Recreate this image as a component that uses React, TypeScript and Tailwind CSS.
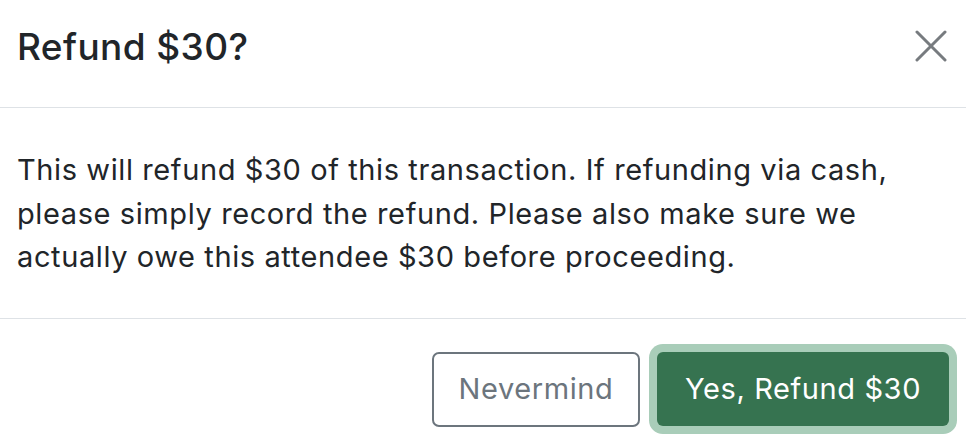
import React from 'react';

const FONT = "font-['Inter','Liberation_Sans',sans-serif]";

function CloseIcon() {
  return (
    <svg width="32" height="32" viewBox="0 0 32 32" fill="none">
      <path d="M2 2 L30 30 M30 2 L2 30" stroke="#777b7f" strokeWidth="3" strokeLinecap="round" />
    </svg>
  );
}

export default function App() {
  return (
    <div className={`w-[966px] h-[446px] bg-white text-[#212529] overflow-hidden ${FONT}`}>
      {/* Header */}
      <div className="flex items-start justify-between h-[108px] border-b border-[#dee2e6] pl-[17px] pr-[19px] pt-[25px]">
        <h5 className="text-[37px] leading-[44px] font-medium tracking-[0.4px] m-0">Refund $30?</h5>
        <button className="mt-[5px] w-[32px] h-[32px] flex items-center justify-center">
          <CloseIcon />
        </button>
      </div>

      {/* Body */}
      <div className="px-[17px] pt-[40px] pb-[39px] border-b border-[#dee2e6]">
        <p className="text-[29px] leading-[43.5px] tracking-[0.6px] m-0">
          This will refund $30 of this transaction. If refunding via cash,
          <br />
          please simply record the refund. Please also make sure we
          <br />
          actually owe this attendee $30 before proceeding.
        </p>
      </div>

      {/* Footer */}
      <div className="flex justify-end items-center gap-[17px] pr-[17px] pt-[33px]">
        <button className="w-[208px] h-[75px] rounded-[7px] border-2 border-[#6c757d] text-[#6c757d] text-[29px] tracking-[0.6px] bg-white">
          Nevermind
        </button>
        <button className="w-[292px] h-[74px] rounded-[6px] bg-[#367350] text-white text-[29px] tracking-[0.6px] ring-[8px] ring-[#a9cdb9]">
          Yes, Refund $30
        </button>
      </div>
    </div>
  );
}
